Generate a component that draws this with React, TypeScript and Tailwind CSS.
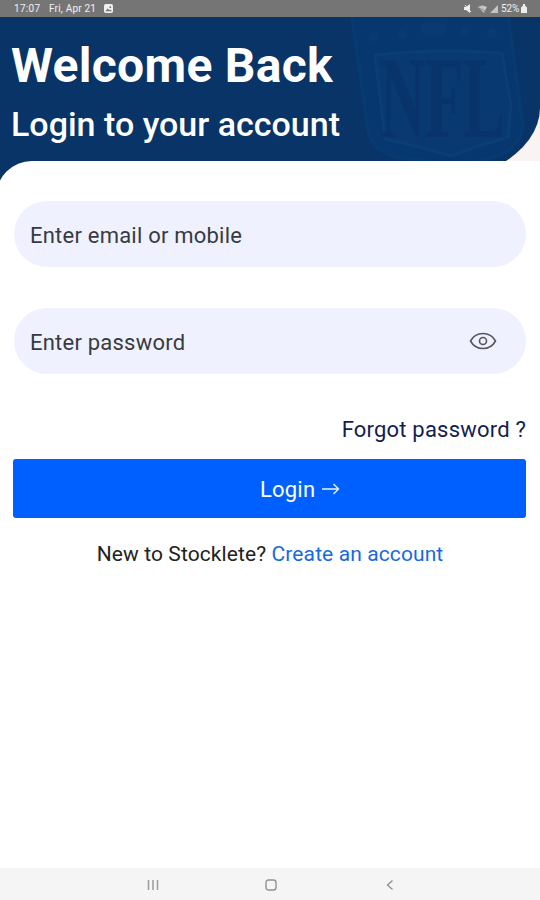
import type { ReactNode } from "react";

function StatusBar() {
  return (
    <div className="flex h-[17px] items-center justify-between bg-[#757575] pr-[13px] pl-[14px] text-[10px] leading-none text-white/90">
      <div className="flex items-center">
        <span className="w-[35px] tracking-[0.3px]">17:07</span>
        <span className="w-[55px] tracking-[0.2px] whitespace-nowrap">
          Fri, Apr 21
        </span>
        <svg viewBox="0 0 10 10" className="size-[9px]">
          <rect width="10" height="10" rx="2" fill="#eee" />
          <path d="M1.5 8 4 5l2 2 1-1 2 2z" fill="#757575" />
          <circle cx="7" cy="3.5" r="1" fill="#757575" />
        </svg>
      </div>

      <div className="flex items-center">
        <svg viewBox="0 0 9 9" className="mr-1.5 size-[9px]">
          <path d="M1 3h2l4-3v9L3 6H1z" fill="#eee" />
          <path d="m2 1 6 7" stroke="#eee" />
        </svg>
        <svg viewBox="0 0 9 9" className="mr-[3px] size-[9px]">
          <path d="M0 3q4.500-3 9 0L6 9z" fill="#c4c4c4" />
          <path d="m1 4 6 3" stroke="#757575" strokeWidth="0.700" />
        </svg>
        <svg viewBox="0 0 8 8" className="mr-[3px] size-[8px]">
          <path d="M8 0v8H0z" fill="#c4c4c4" />
        </svg>
        <span className="w-[20px] tracking-[-0.1px]">52%</span>
        <svg viewBox="0 0 6 9" className="h-[9px] w-[6px]">
          <path d="M2 0h2v1.500l2 2V9H0V3.500l2-2z" fill="#eee" />
        </svg>
      </div>
    </div>
  );
}

function Shield() {
  return (
    <svg
      viewBox="0 0 200 156"
      className="absolute top-0 right-0 h-[156px] w-[200px]"
      fill="none"
    >
      <path
        d="M13 0 28 112Q32 136 66 142Q96 144 111 153Q128 144 153 140Q182 135 184 110L177 65 168 0Z"
        fill="#06376e"
      />
      <path
        d="M12 0 28 112Q31 135 62 141Q94 143 111 153M168 0l9 65 6 45Q178 135 150 141L111 153"
        stroke="#073a71"
        strokeWidth="4"
      />
      <path
        d="M35 38Q98 31 162 36L171 88 168 120Q139 128 111 139Q82 130 45 122Z"
        fill="#083a71"
        stroke="#0a3e74"
        strokeWidth="3"
      />
      <g fill="#093b72">
        <circle cx="34" cy="20" r="5" />
        <circle cx="62" cy="18" r="5" />
        <circle cx="125" cy="14" r="5" />
        <circle cx="152" cy="16" r="5" />
        <ellipse cx="93" cy="12" rx="13" ry="8" />
      </g>
      <g transform="translate(40 120) scale(0.54 1)">
        <text
          fill="#09336b"
          className="font-['Liberation_Serif',serif] text-[116px] font-bold"
        >
          NFL
        </text>
      </g>
    </svg>
  );
}

function Header() {
  return (
    <header className="relative h-[173px] overflow-hidden rounded-br-[143px_82px] bg-[#083467] pl-[11px] text-white">
      <Shield />
      <h1 className="relative pt-[21px] text-[48px] leading-[56px] font-bold tracking-[0.3px]">
        Welcome Back
      </h1>
      <p className="relative mt-[10px] text-[34px] leading-[40px] font-medium">
        Login to your account
      </p>
    </header>
  );
}

function Field({ label, children }: { label: string; children?: ReactNode }) {
  return (
    <div className="flex h-[66px] items-center justify-between rounded-full bg-[#eff2fe] pr-[29px] pl-[16px] text-[22px] tracking-[0.22px] text-[#383a40]">
      <span className="pt-[2px]">{label}</span>
      {children}
    </div>
  );
}

function EyeIcon() {
  return (
    <svg
      viewBox="0 0 28 18"
      className="h-[18px] w-[28px]"
      fill="none"
      stroke="#55565f"
      strokeWidth="1.600"
      strokeLinejoin="round"
    >
      <path d="M1.500 9C7-1 21-1 26.500 9C21 19 7 19 1.500 9Z" />
      <circle cx="14" cy="9" r="3.500" />
    </svg>
  );
}

function NavBar() {
  return (
    <nav className="flex h-[32px] items-center bg-[#f5f5f5] pt-[2px] pl-[147px]">
      <svg viewBox="0 0 12 12" className="size-[12px]" stroke="#9b9b9b" strokeWidth="1.500">
        <path d="M1.500 1v10M6 1v10M10.500 1v10" />
      </svg>
      <svg viewBox="0 0 12 12" className="ml-[106px] size-[12px]" fill="none" stroke="#929292" strokeWidth="1.400">
        <rect x="1" y="1" width="10" height="10" rx="2.500" />
      </svg>
      <svg viewBox="0 0 8 12" className="ml-[109px] h-[12px] w-[8px]" fill="none" stroke="#929292" strokeWidth="1.400">
        <path d="M6.500 1.500 1.500 6l5 4.500" />
      </svg>
    </nav>
  );
}

export default function App() {
  return (
    <div className="flex h-[900px] w-[540px] flex-col overflow-hidden bg-[#f9f3f4] font-[Roboto,sans-serif]">
      <StatusBar />
      <Header />

      <main className="relative -mt-[29px] -ml-1 flex flex-1 flex-col rounded-tl-[36px] bg-white pt-[40px] pr-[14px] pl-[18px]">
        <Field label="Enter email or mobile" />
        <div className="h-[41px]" />
        <Field label="Enter password">
          <EyeIcon />
        </Field>

        <a className="mt-[42px] self-end text-[22px] leading-[28px] tracking-[0.2px] text-[#141d50]">
          Forgot password ?
        </a>

        <button className="mt-[15px] -ml-px flex h-[59px] items-center rounded-[3px] bg-[#0060ff] pl-[247px] text-[22px] tracking-[0.2px] text-white">
          <span className="pt-[2px]">Login</span>
          <svg viewBox="0 0 18 12" className="ml-[7px] h-[12px] w-[18px]" fill="none" stroke="#e8f0ff" strokeWidth="1.400">
            <path d="M0 6h16.500M11.500 1l5 5-5 5" />
          </svg>
        </button>

        <p className="mt-[22px] text-center text-[21px] leading-[28px] tracking-[0.1px] text-[#222]">
          New to Stocklete?{" "}
          <a className="text-[#1769df]">Create an account</a>
        </p>
      </main>

      <NavBar />
    </div>
  );
}
